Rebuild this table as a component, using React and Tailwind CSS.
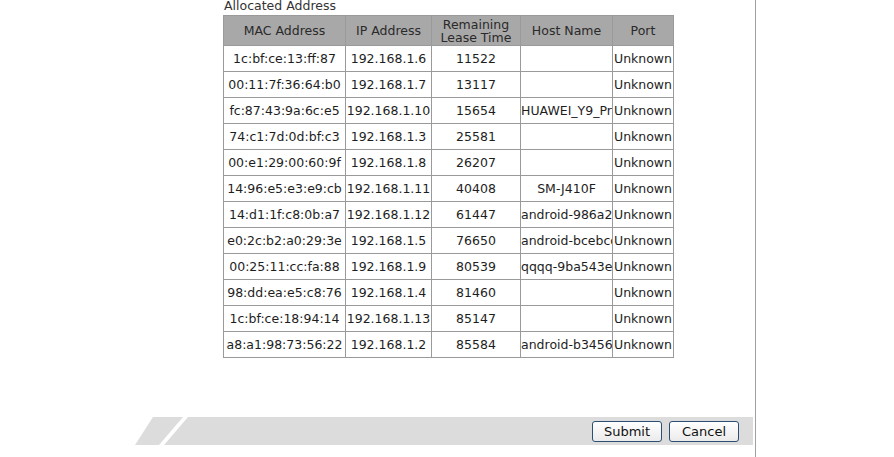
import React from "react";

const rows = [
  ["1c:bf:ce:13:ff:87", "192.168.1.6", "11522", ""],
  ["00:11:7f:36:64:b0", "192.168.1.7", "13117", ""],
  ["fc:87:43:9a:6c:e5", "192.168.1.10", "15654", "HUAWEI_Y9_Prime_2019"],
  ["74:c1:7d:0d:bf:c3", "192.168.1.3", "25581", ""],
  ["00:e1:29:00:60:9f", "192.168.1.8", "26207", ""],
  ["14:96:e5:e3:e9:cb", "192.168.1.11", "40408", "SM-J410F"],
  ["14:d1:1f:c8:0b:a7", "192.168.1.12", "61447", "android-986a2f1c0e"],
  ["e0:2c:b2:a0:29:3e", "192.168.1.5", "76650", "android-bcebcc1d2a"],
  ["00:25:11:cc:fa:88", "192.168.1.9", "80539", "qqqq-9ba543e2b1"],
  ["98:dd:ea:e5:c8:76", "192.168.1.4", "81460", ""],
  ["1c:bf:ce:18:94:14", "192.168.1.13", "85147", ""],
  ["a8:a1:98:73:56:22", "192.168.1.2", "85584", "android-b3456c8e1f"],
];

function App() {
  return (
    <div
      className="flex h-[457px] w-[894px] overflow-hidden bg-white text-[12.5px] text-[#1e1e1e]"
      style={{ fontFamily: '"DejaVu Sans", Verdana, sans-serif' }}
    >
      <div className="w-[135px] shrink-0" />
      <div className="flex w-[621px] shrink-0 flex-col border-r border-[#a0a0a0]">
        <div className="ml-[89px] mt-[-1px] h-[16px] leading-[14px] text-[#333]">
          Allocated Address
        </div>
        <table className="ml-[88px] w-[450px] table-fixed border-collapse">
          <colgroup>
            <col className="w-[122px]" />
            <col className="w-[86px]" />
            <col className="w-[89px]" />
            <col className="w-[92px]" />
            <col className="w-[61px]" />
          </colgroup>
          <thead>
            <tr className="h-[30px] bg-[#a8a8a8] text-[#2a2a2a]">
              <th className="border border-[#9a9a9a] pt-px font-normal">MAC Address</th>
              <th className="border border-[#9a9a9a] pt-px font-normal">IP Address</th>
              <th className="border border-[#9a9a9a] pt-px font-normal leading-[13px]">
                Remaining
                <br />
                Lease Time
              </th>
              <th className="border border-[#9a9a9a] pt-px font-normal">Host Name</th>
              <th className="border border-[#9a9a9a] pt-px font-normal">Port</th>
            </tr>
          </thead>
          <tbody>
            {rows.map((r) => (
              <tr key={r[0]} className="h-[26px]">
                {r.map((c, i) => (
                  <td
                    key={i}
                    className="overflow-hidden whitespace-nowrap border border-[#9a9a9a] px-0 pt-px text-center"
                  >
                    {c}
                  </td>
                ))}
                <td className="overflow-hidden whitespace-nowrap border border-[#9a9a9a] px-0 pt-px text-center">
                  Unknown
                </td>
              </tr>
            ))}
          </tbody>
        </table>
        <div className="mt-auto mb-[12px] mr-[2px] flex h-[28px]">
          <svg width="60" height="28" className="shrink-0">
            <polygon points="18,0 48,0 24,28 0,28" fill="#dcdcdc" />
            <polygon points="53,0 60,0 60,28 29,28" fill="#dcdcdc" />
          </svg>
          <div className="flex flex-1 items-center justify-end gap-[7px] bg-[#dcdcdc] pr-[14px]">
            <button className="h-[21px] w-[70px] rounded-[3px] border border-[#2b4f74] bg-gradient-to-b from-white to-[#ebebeb] text-[13px] text-[#111]">
              Submit
            </button>
            <button className="h-[21px] w-[70px] rounded-[3px] border border-[#2b4f74] bg-gradient-to-b from-white to-[#ebebeb] text-[13px] text-[#111]">
              Cancel
            </button>
          </div>
        </div>
      </div>
    </div>
  );
}

export default App;
